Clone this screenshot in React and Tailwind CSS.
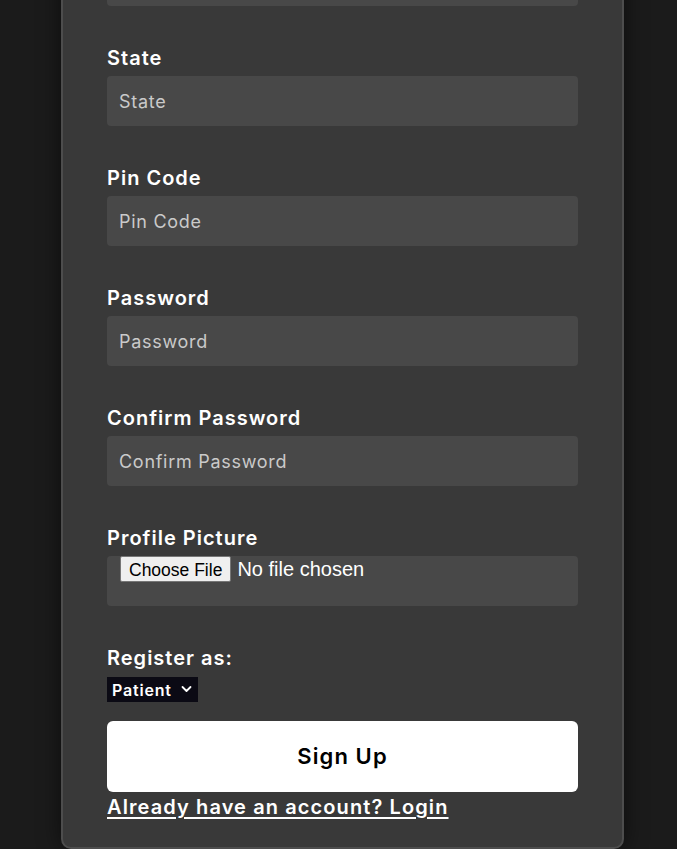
import { useState } from 'react';

const FIELDS = [
  { label: 'State', type: 'text' },
  { label: 'Pin Code', type: 'text' },
  { label: 'Password', type: 'password' },
  { label: 'Confirm Password', type: 'password' },
];

function Label({ children, className = '' }) {
  return (
    <label className={`block text-[20px] leading-[30px] font-semibold tracking-[0.05em] text-white ${className}`}>
      {children}
    </label>
  );
}

function Field({ label, type }) {
  return (
    <div className="flex flex-col">
      <Label className="mb-[3px]">{label}</Label>
      <input
        type={type}
        placeholder={label}
        className="h-[50px] w-full rounded-[4px] bg-[#484848] px-3 text-[18px] tracking-[0.04em] text-white placeholder:text-[#cacaca] outline-none"
      />
    </div>
  );
}

export default function App() {
  const [role, setRole] = useState('patient');

  return (
    <div className="min-h-screen bg-[#1b1b1b] font-['Inter',sans-serif] overflow-hidden">
      <div className="ml-[61px] w-[563px] -mt-[46px] rounded-b-[10px] border-2 border-[#4d4d4d] bg-[#393939] px-[44px] pb-[25px] shadow-[0_0_22px_rgba(0,0,0,0.55)]">
        {/* tail of the previous field, scrolled off the top */}
        <div className="h-[50px] w-full rounded-[4px] bg-[#484848]" />

        <div className="mt-[37px] flex flex-col gap-[37px]">
          {FIELDS.map((f) => (
            <Field key={f.label} {...f} />
          ))}

          <div className="flex flex-col">
            <Label className="mb-[3px]">Profile Picture</Label>
            <div className="h-[50px] w-full rounded-[4px] bg-[#484848] px-[13px]">
              <input
                type="file"
                className="block w-full text-[20px] leading-[26px] text-white font-['Liberation_Sans',Arial,sans-serif] outline-none file:mr-[6px] file:h-[26px] file:rounded-[2px] file:border file:border-[#767676] file:bg-[#efefef] file:px-2 file:text-[17.5px] file:text-black"
              />
            </div>
          </div>

          <div className="flex flex-col items-start">
            <Label className="mb-[4px]">Register as:</Label>
            <div className="relative">
              <select
                value={role}
                onChange={(e) => setRole(e.target.value)}
                className="h-[25px] w-[91px] appearance-none bg-[#0b0a14] pl-[5px] text-[16px] font-semibold tracking-[0.05em] text-white outline-none"
              >
                <option value="patient">Patient</option>
                <option value="doctor">Doctor</option>
              </select>
              <svg
                className="pointer-events-none absolute right-[6px] top-[8px]"
                width="11"
                height="8"
                viewBox="0 0 11 8"
                fill="none"
                stroke="white"
                strokeWidth="1.8"
                strokeLinecap="round"
                strokeLinejoin="round"
              >
                <path d="M1.5 2l4 4 4-4" />
              </svg>
            </div>
          </div>
        </div>

        <button className="mt-[19px] h-[71px] w-full rounded-[6px] bg-white text-[22px] font-semibold tracking-[0.05em] text-black">
          Sign Up
        </button>
        <a href="#" className="block text-[20px] leading-[30px] font-semibold tracking-[0.055em] text-white underline underline-offset-[3px]">
          Already have an account? Login
        </a>
      </div>
      <div className="h-px w-full bg-[#c3c6cb]" />
    </div>
  );
}
